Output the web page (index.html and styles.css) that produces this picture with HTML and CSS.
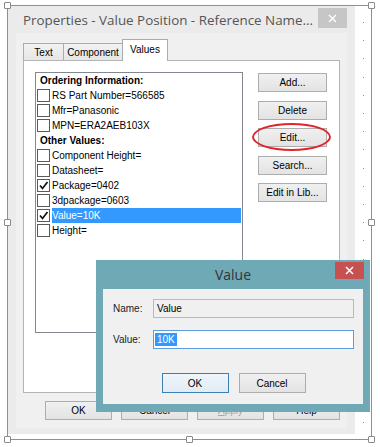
FILE: index.html
```html
<!DOCTYPE html>
<html lang="en">
<head>
    <meta charset="UTF-8">
    <title>Properties - Value Position</title>
    <link rel="stylesheet" href="styles.css">
</head>
<body>
    <div class="canvas">
        <div class="figure">
            <div class="window">
                <div class="titlebar">
                    <span class="title">Properties - Value Position - Reference Name...</span>
                    <span class="close-btn">
                        <svg width="9" height="9" viewBox="0 0 9 9"><path d="M1 1L8 8M8 1L1 8" stroke="#fff" stroke-width="1.4"/></svg>
                    </span>
                </div>
                <div class="client">
                    <div class="tabs">
                        <div class="tab tab-text">Text</div>
                        <div class="tab tab-component">Component</div>
                        <div class="tab tab-active">Values</div>
                    </div>
                    <div class="tabpage">
                        <div class="listbox">
                            <div class="group">Ordering Information:</div>
                            <div class="item"><span class="check"></span><span class="label">RS Part Number=566585</span></div>
                            <div class="item"><span class="check"></span><span class="label">Mfr=Panasonic</span></div>
                            <div class="item"><span class="check"></span><span class="label">MPN=ERA2AEB103X</span></div>
                            <div class="group">Other Values:</div>
                            <div class="item"><span class="check"></span><span class="label">Component Height=</span></div>
                            <div class="item"><span class="check"></span><span class="label">Datasheet=</span></div>
                            <div class="item"><span class="check checked"><svg width="11" height="11" viewBox="0 0 11 11"><path d="M2 5.5L4.5 8.5L9.5 2" fill="none" stroke="#111" stroke-width="1.7"/></svg></span><span class="label">Package=0402</span></div>
                            <div class="item"><span class="check"></span><span class="label">3dpackage=0603</span></div>
                            <div class="item"><span class="check checked"><svg width="11" height="11" viewBox="0 0 11 11"><path d="M2 5.5L4.5 8.5L9.5 2" fill="none" stroke="#111" stroke-width="1.7"/></svg></span><span class="label selected">Value=10K</span></div>
                            <div class="item"><span class="check"></span><span class="label">Height=</span></div>
                        </div>
                        <div class="side-buttons">
                            <button class="btn">Add...</button>
                            <button class="btn">Delete</button>
                            <button class="btn">Edit...</button>
                            <button class="btn">Search...</button>
                            <button class="btn">Edit in Lib...</button>
                        </div>
                    </div>
                    <div class="footer">
                        <button class="btn">OK</button>
                        <button class="btn">Cancel</button>
                        <button class="btn disabled"><u>A</u>pply</button>
                        <button class="btn">Help</button>
                    </div>
                </div>
            </div>
            <div class="margin-guide"></div>
        </div>

        <span class="handle h-tl"></span>
        <span class="handle h-tr"></span>
        <span class="handle h-ml"></span>
        <span class="handle h-mr"></span>
        <span class="handle h-bl"></span>
        <span class="handle h-bm"></span>
        <span class="handle h-br"></span>

        <div class="ring"></div>

        <div class="dialog">
            <div class="dialog-titlebar">
                <span class="dialog-title">Value</span>
                <span class="dialog-close">
                    <svg width="9" height="9" viewBox="0 0 9 9"><path d="M1 1L8 8M8 1L1 8" stroke="#fff" stroke-width="1.5"/></svg>
                </span>
            </div>
            <div class="dialog-client">
                <div class="field">
                    <span class="field-label">Name:</span>
                    <span class="textbox readonly">Value</span>
                </div>
                <div class="field field-value">
                    <span class="field-label">Value:</span>
                    <span class="textbox focused"><span class="sel">10K</span></span>
                </div>
                <div class="dialog-buttons">
                    <button class="btn default">OK</button>
                    <button class="btn">Cancel</button>
                </div>
            </div>
        </div>
    </div>
</body>
</html>
```

FILE: styles.css
```css
body { margin: 0; background: #fff; font-family: "Liberation Sans", Arial, sans-serif; font-size: 10px; color: #000; }
.canvas { position: relative; width: 380px; height: 447px; overflow: hidden; }

/* picture frame with selection handles */
.figure { display: flex; margin: 5px 0 0 7px; width: 363px; height: 433px; border: 1px solid #8f8f8f; }
.margin-guide { width: 1px; margin: 16px 0 0 8px; background: repeating-linear-gradient(to bottom, #8a8a8a 0 1px, transparent 1px 18.2px); }
.handle { position: absolute; width: 5px; height: 5px; background: #fff; border: 1px solid #8a8a8a; border-radius: 1px; }
.h-tl { left: 4px; top: 2px; }
.h-tr { left: 368px; top: 2px; }
.h-ml { left: 4px; top: 219px; }
.h-mr { left: 368px; top: 219px; }
.h-bl { left: 4px; top: 436px; }
.h-bm { left: 186px; top: 436px; }
.h-br { left: 368px; top: 436px; }

/* main properties window */
.window { width: 347px; height: 428px; background: #ebebeb; box-sizing: border-box; padding: 0 8px 6px; display: flex; flex-direction: column; }
.titlebar { height: 27px; display: flex; align-items: flex-start; justify-content: space-between; }
.title { font-family: "Open Sans", sans-serif; font-size: 13.4px; color: #555; margin: 5px 0 0 7px; white-space: nowrap; }
.close-btn { width: 29px; height: 20px; margin-top: 2px; background: #c6c6c6; display: flex; align-items: center; justify-content: center; }
.client { flex: 1; background: #f0f0f0; padding: 6px 7px 8px; display: flex; flex-direction: column; }

.tabs { display: flex; align-items: flex-end; height: 21px; position: relative; z-index: 1; }
.tab { height: 17px; box-sizing: border-box; border: 1px solid #acacac; border-bottom: none; background: linear-gradient(#f2f2f2, #e6e6e6); display: flex; align-items: center; justify-content: center; padding-top: 1px; }
.tab-text { width: 41px; }
.tab-component { width: 60px; margin-left: -1px; }
.tab-active { width: 46px; height: 22px; margin-left: -1px; margin-bottom: -1px; background: #fff; padding-bottom: 3px; }

.tabpage { height: 333px; box-sizing: border-box; border: 1px solid #b4b4b4; background: #fff; padding: 11px; display: flex; gap: 15px; }
.listbox { width: 208px; height: 261px; box-sizing: border-box; border: 1px solid #828790; padding: 0 1px; }
.group { height: 15px; line-height: 15px; font-weight: bold; padding-left: 3px; }
.item { height: 15px; display: flex; align-items: center; gap: 2px; }
.check { width: 13px; height: 13px; box-sizing: border-box; border: 1px solid #5b5b5b; background: #fff; display: flex; align-items: center; justify-content: center; }
.label { flex: 1; height: 15px; line-height: 15px; }
.label.selected { background: #3399ff; color: #fff; }

.side-buttons { display: flex; flex-direction: column; gap: 8.5px; padding-top: 1px; }
.btn { font-family: "Liberation Sans", Arial, sans-serif; font-size: 10px; color: #000; width: 69px; height: 19px; padding: 0; border: 1px solid #adadad; background: linear-gradient(#f0f0f0, #e3e3e3); }
.btn.disabled { color: #a6a6a6; }
.footer { display: flex; justify-content: flex-end; gap: 9px; margin-top: 8px; }
.footer .btn { width: 67px; }

/* red marker round the Edit button */
.ring { position: absolute; left: 252px; top: 123px; width: 75px; height: 24px; border: 2px solid #e3242b; border-radius: 50%; }

/* Value dialog on top */
.dialog { position: absolute; left: 96px; top: 260px; width: 274px; height: 152px; background: #70a9b6; display: flex; flex-direction: column; }
.dialog-titlebar { height: 29px; position: relative; display: flex; justify-content: center; }
.dialog-title { font-family: "Open Sans", sans-serif; font-size: 14px; color: #333; line-height: 29px; }
.dialog-close { position: absolute; right: 6px; top: 2px; width: 29px; height: 17px; background: #c75050; display: flex; align-items: center; justify-content: center; }
.dialog-client { flex: 1; margin: 0 7px 8px; background: #f0f0f0; padding: 10px 9px 0 10px; }
.field { display: flex; align-items: center; height: 19px; }
.field-value { margin-top: 12px; }
.field-label { width: 40px; color: #222; }
.textbox { width: 201px; height: 19px; box-sizing: border-box; border: 1px solid #b9b9b9; padding: 0 2px 0 3px; line-height: 17px; }
.textbox.readonly { background: #f0f0f0; }
.textbox.focused { background: #fff; border-color: #5b9ddf; padding-left: 1px; }
.sel { background: #3399ff; color: #fff; padding: 1px 2px; }
.dialog-buttons { display: flex; justify-content: center; gap: 10px; margin-top: 24px; }
.dialog-buttons .btn { width: 67px; height: 20px; }
.btn.default { border-color: #3c7fb1; background: linear-gradient(#eef5fb, #e2ecf5); }
```
